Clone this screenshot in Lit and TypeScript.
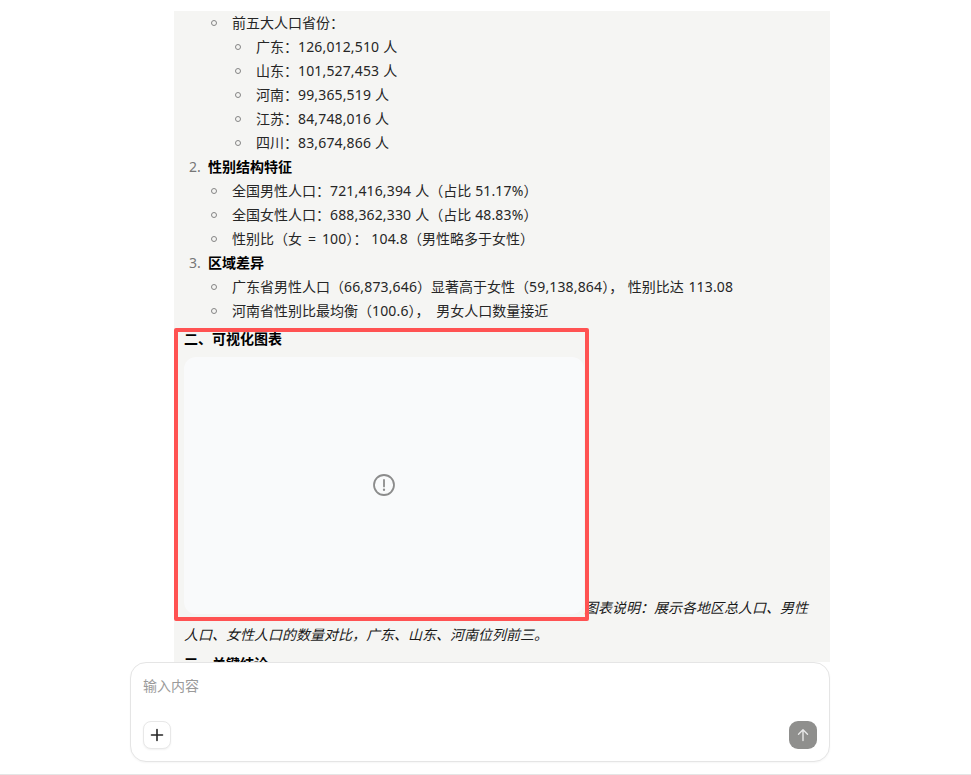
import { LitElement, html, css } from "lit";
import { customElement } from "lit/decorators.js";

/* Wraps runs of digits and punctuation so they can take a slightly wider tracking than the CJK text. */
const t = (text: string) =>
  text.split(/([0-9.,%]+)/).map((part, i) => (i % 2 ? html`<span class="n">${part}</span>` : part));

@customElement("app-root")
export class AppRoot extends LitElement {
  static styles = css`
    :host {
      display: flex;
      flex-direction: column;
      height: 775px;
      overflow: hidden;
      position: relative;
      background: #fff;
      font-family: "Noto Sans", "Noto Sans CJK SC", sans-serif;
      font-size: 14px;
      line-height: 24px;
      color: #262626;
    }
    .main {
      flex: 1;
      min-height: 0;
      overflow: hidden;
      box-sizing: border-box;
      margin: 11px 0 0 174px;
      width: 656px;
      padding: 0 10px;
      background: #f5f5f3;
      word-spacing: 0.3px;
    }
    .n {
      letter-spacing: 0.15px;
    }
    .eq {
      margin: 0 2px;
    }
    .wide {
      word-spacing: 3px;
    }
    .wider {
      word-spacing: 1px;
    }
    ol,
    ul {
      margin: 0;
      padding: 0 0 0 24px;
      list-style: none;
    }
    ol > li:not(.nomark)::before {
      content: counter(list-item) ".";
      display: inline-block;
      width: 19px;
      margin-left: -19px;
      color: #777;
    }
    ul > li::before {
      content: "";
      display: inline-block;
      box-sizing: border-box;
      width: 6px;
      height: 6px;
      margin: 0 15px 0 -21px;
      vertical-align: 2px;
      border: 1px solid #858585;
      border-radius: 50%;
    }
    strong {
      color: #000;
      font-weight: 700;
    }
    h3 {
      margin: 4px 0 0;
      font-size: 14px;
      line-height: 24px;
      font-weight: 700;
      color: #000;
    }
    .fig {
      margin: 6px 0 4px;
      font-style: italic;
      color: #1a1a1a;
      line-height: 27px;
    }
    .chart {
      display: inline-block;
      overflow: hidden;
      width: 400px;
      height: 257px;
      margin-bottom: -1px;
      border-radius: 12px;
      background: #f9fafb;
      color: #8c8c8c;
    }
    .chart-inner {
      box-sizing: border-box;
      height: 100%;
      padding-bottom: 1px;
      display: flex;
      align-items: center;
      justify-content: center;
    }
    .chart svg {
      display: block;
    }
    .composer {
      box-sizing: border-box;
      flex: none;
      margin: 0 0 12px 130px;
      width: 700px;
      height: 100px;
      padding: 11px 12px 12px 12px;
      border: 1px solid #e5e5e5;
      border-radius: 16px;
      background: #fff;
      box-shadow: 0 1px 2px rgba(0, 0, 0, 0.04);
      display: flex;
      flex-direction: column;
      justify-content: space-between;
    }
    .placeholder {
      color: #9a9a9a;
      line-height: 24px;
    }
    .actions {
      display: flex;
      justify-content: space-between;
      align-items: center;
    }
    .plus,
    .send {
      box-sizing: border-box;
      width: 28px;
      height: 28px;
      padding: 0;
      display: flex;
      align-items: center;
      justify-content: center;
    }
    .plus {
      border: 1px solid #e8e8e8;
      border-radius: 8px;
      background: #fff;
      box-shadow: 0 1px 2px rgba(0, 0, 0, 0.06);
      color: #262626;
    }
    .send {
      border: 0;
      border-radius: 9px;
      background: #8f8f8d;
      color: #e8e8e8;
    }
    .rule {
      flex: none;
      height: 1px;
      background: #e5e5e5;
    }
    .annotation {
      position: absolute;
      left: 174px;
      top: 328px;
      width: 415px;
      height: 293px;
      box-sizing: border-box;
      border: 4px solid #ff5252;
      border-radius: 2px;
      pointer-events: none;
    }
  `;

  render() {
    return html`
      <div class="main">
        <ol>
          <li class="nomark">
            <ul>
              <li>前五大人口省份：
                <ul>
                  <li>广东：${t("126,012,510")} 人</li>
                  <li>山东：${t("101,527,453")} 人</li>
                  <li>河南：${t("99,365,519")} 人</li>
                  <li>江苏：${t("84,748,016")} 人</li>
                  <li>四川：${t("83,674,866")} 人</li>
                </ul>
              </li>
            </ul>
          </li>
          <li value="2"><strong>性别结构特征</strong>
            <ul>
              <li>${t("全国男性人口：721,416,394 人（占比 51.17%）")}</li>
              <li>${t("全国女性人口：688,362,330 人（占比 48.83%）")}</li>
              <li>性别比（女 <span class="eq">=</span> ${t("100）： 104.8（男性略多于女性）")}</li>
            </ul>
          </li>
          <li value="3"><strong>区域差异</strong>
            <ul>
              <li class="wider">${t("广东省男性人口（66,873,646）显著高于女性（59,138,864）， 性别比达 113.08")}</li>
              <li class="wide">${t("河南省性别比最均衡（100.6）， 男女人口数量接近")}</li>
            </ul>
          </li>
        </ol>
        <h3>二、可视化图表</h3>
        <p class="fig"><span class="chart"><span class="chart-inner">
              <svg width="24" height="24" viewBox="0 0 24 24" fill="none" stroke="currentColor" stroke-width="1.8" stroke-linecap="round">
                <circle cx="12" cy="12" r="10"></circle>
                <path d="M12 7v6.4"></path>
                <path d="M12 16.6v.3" stroke-width="2.2"></path>
              </svg></span></span>图表说明：展示各地区总人口、男性人口、女性人口的数量对比，广东、山东、河南位列前三。</p>
        <h3>三、关键结论</h3>
      </div>
      <div class="composer">
        <div class="placeholder">输入内容</div>
        <div class="actions">
          <button class="plus" aria-label="添加">
            <svg width="14" height="14" viewBox="0 0 14 14" fill="none" stroke="currentColor" stroke-width="1.6" stroke-linecap="round">
              <path d="M7 1.5v11M1.5 7h11"></path>
            </svg>
          </button>
          <button class="send" aria-label="发送">
            <svg width="14" height="14" viewBox="0 0 14 14" fill="none" stroke="currentColor" stroke-width="1.4" stroke-linecap="round" stroke-linejoin="round">
              <path d="M7 12.5V1.8M2.5 6.3 7 1.8l4.5 4.5"></path>
            </svg>
          </button>
        </div>
      </div>
      <div class="rule"></div>
      <div class="annotation"></div>
    `;
  }
}
